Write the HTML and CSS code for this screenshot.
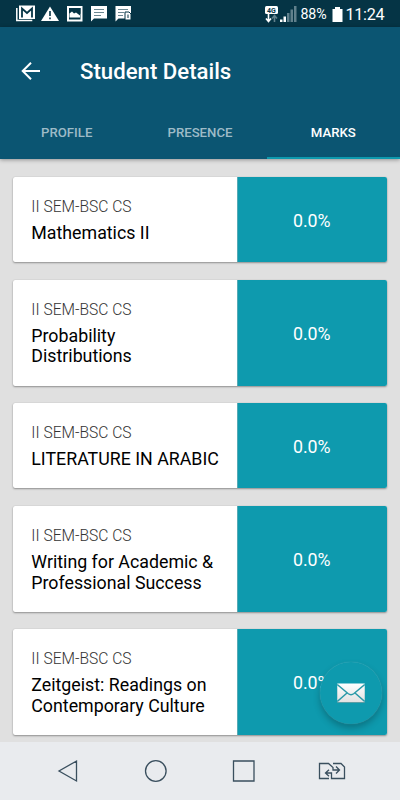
FILE: index.html
```html
<!DOCTYPE html>
<html lang="en">
<head>
<meta charset="utf-8">
<title>Student Details</title>
<link rel="stylesheet" href="styles.css">
</head>
<body>
<div class="screen">
  <header class="status">
    <svg class="notices" width="140" height="27" viewBox="0 0 140 27" fill="#fff">
      <path d="M16.800 8v12.500h15.500" fill="none" stroke="#fff" stroke-width="1.5"/>
      <path d="M19 5.500h16V19H19z"/>
      <path d="M22 17.500V8.500l5 4.500L32 8.500v9" fill="none" stroke="#053445" stroke-width="1.8"/>
      <path d="M50 6.500L59 21H41z"/>
      <path d="M50 11v5M50 17.500v1.700" stroke="#053445" stroke-width="1.6"/>
      <path fill-rule="evenodd" d="M67 6h15.500v15.500H67zM69 8v11.500h11.500V8z"/>
      <path d="M69 8h11.500v6l-2.500-2-2 2-2.500-1.500L69 17z" fill="#053445"/>
      <path d="M69.500 17.500v-4l2.500-2 2 2 2-1 4 3v2z"/>
      <path d="M91 6h16v12.500H94L91 21.500z"/>
      <path d="M94 9.500h10M94 12.500h10M94 15.500h7" stroke="#6b8791" stroke-width="1"/>
      <path d="M115.500 6h15.500v12.500h-12.500l-3 3z"/>
      <path d="M118 9.500h10M118 12.500h6M118 15.500h5" stroke="#6b8791" stroke-width="1"/>
      <path d="M125 12h4l2 2v6h-6z" stroke="#053445"/>
      <path d="M128 14.500v3.500" stroke="#053445"/>
    </svg>
    <div class="system">
      <svg width="34" height="22" viewBox="0 0 34 22">
        <rect x="1" y="3" width="13" height="8" rx="1.500" fill="#fff"/>
        <text class="network" x="7.500" y="9.600" text-anchor="middle">4G</text>
        <path d="M4.500 11v7M2 15.500l2.500 3 2.500-3" fill="none" stroke="#fff" stroke-width="1.6"/>
        <path d="M10.500 19v-6M8 15.500l2.500-3 2.500 3" fill="none" stroke="#60808c" stroke-width="1.6"/>
        <path d="M16 16.500h2.500V19H16zM19.500 13.500H22V19h-2.500z" fill="#fff"/>
        <path d="M23 10h2.500v9H23zM26.500 6.500H29V19h-2.500zM30 3h2.500v16H30z" fill="#60808c"/>
      </svg>
      <span class="charge">88%</span>
      <svg width="11" height="17" viewBox="0 0 11 17"><path d="M3 1h5v2h2.500v13H.5V3H3z" fill="#fff"/></svg>
      <span class="clock">11:24</span>
    </div>
  </header>
  <div class="appbar">
    <div class="toolbar">
      <svg class="back" width="20" height="20" viewBox="0 0 20 20"><path d="M19 10H2M10 1.700L1.700 10l8.300 8.300" fill="none" stroke="#fff" stroke-width="2"/></svg>
      <h1>Student Details</h1>
    </div>
    <nav class="tabs">
      <span class="tab">PROFILE</span>
      <span class="tab">PRESENCE</span>
      <span class="tab active">MARKS</span>
    </nav>
  </div>
  <main class="list">
    <article class="card"><div class="info"><p class="group">II SEM-BSC CS</p><h2>Mathematics II</h2></div><div class="mark">0.0%</div></article>
    <article class="card tall"><div class="info"><p class="group">II SEM-BSC CS</p><h2>Probability<br>Distributions</h2></div><div class="mark">0.0%</div></article>
    <article class="card"><div class="info"><p class="group">II SEM-BSC CS</p><h2>LITERATURE IN ARABIC</h2></div><div class="mark">0.0%</div></article>
    <article class="card tall"><div class="info"><p class="group">II SEM-BSC CS</p><h2>Writing for Academic &amp;<br>Professional Success</h2></div><div class="mark">0.0%</div></article>
    <article class="card tall"><div class="info"><p class="group">II SEM-BSC CS</p><h2>Zeitgeist: Readings on<br>Contemporary Culture</h2></div><div class="mark">0.0%</div></article>
    <div class="fab">
      <svg width="28" height="20" viewBox="0 0 28 20">
        <defs><linearGradient id="paper" x1="0" y1="0" x2="0" y2="1"><stop offset="0" stop-color="#fff"/><stop offset="1" stop-color="#e2e2e2"/></linearGradient></defs>
        <rect x=".3" y="1.500" width="27.400" height="18.500" fill="#5c9ea5"/>
        <rect x=".3" y=".5" width="27.400" height="18.500" fill="url(#paper)"/>
        <path d="M.3 1.500L11 10.500q3 2.300 6 0L27.700 1.500M.3 18.500l9.700-8.500M27.700 18.500L18 10" fill="none" stroke="#2a99a8" stroke-width="1.500"/>
      </svg>
    </div>
  </main>
  <footer class="navbar">
    <svg width="400" height="58" viewBox="0 0 400 58" fill="none" stroke="#3a4f5e" stroke-width="1.300">
      <path d="M76.500 19v20L59 29z"/>
      <circle cx="155.800" cy="29" r="10.300"/>
      <path d="M233.500 19h20.500v20h-20.500z"/>
      <path d="M329 36.500h-9.500v-15h9l4.500 4v2.500h6M336 24.500l3.500 3.500-3.500 3.500M333 21.500h8l3.500 3.500v11.500h-13V31H325.500M329 27.800L325.500 31l3.500 3.200"/>
    </svg>
  </footer>
</div>
</body>
</html>
```
FILE: styles.css
```css
* { box-sizing: border-box; }
body { margin: 0; font-family: Roboto, sans-serif; background: #e0e0e0; }
h1, h2, p { margin: 0; }
svg { display: block; flex: none; }

.screen { width: 400px; height: 800px; display: flex; flex-direction: column; overflow: hidden; }

.status { flex: none; height: 27px; background: #053445; display: flex; justify-content: space-between; color: #fff; }
.system { display: flex; align-items: center; padding: 1px 16.5px 0 0; }
.network { font-size: 7px; font-weight: 700; fill: #053445; }
.charge { width: 27px; margin: 0 4px 0 2.5px; font-size: 14.2px; letter-spacing: -.1px; }
.clock { width: 38px; margin-left: 3px; font-size: 16.2px; letter-spacing: -.3px; white-space: nowrap; }

.appbar { flex: none; height: 132px; background: #0b5572; position: relative; z-index: 1; box-shadow: 0 1px 4px rgba(0,0,0,.35); }
.toolbar { height: 88px; display: flex; align-items: center; padding-left: 21px; }
.toolbar h1 { margin-left: 39px; color: #fff; font-size: 22.2px; font-weight: 500; line-height: 26px; }
.tabs { display: flex; height: 44px; }
.tab { flex: 1; display: flex; align-items: center; justify-content: center; padding-bottom: 10px; font-size: 13.2px; font-weight: 500; color: #9dbbc7; }
.tab.active { color: #fff; border-bottom: 2px solid #0e9aae; padding-bottom: 8px; }

.list { flex: 1; min-height: 0; position: relative; padding: 18px 13.5px 0 13px; display: flex; flex-direction: column; gap: 17.6px; }
.card { flex: none; display: flex; height: 85.2px; background: #fff; border-radius: 2px; overflow: hidden; box-shadow: 0 1px 2px rgba(0,0,0,.35), 0 0 1px rgba(0,0,0,.2); }
.card.tall { height: 105.8px; }
.info { width: 224px; padding: 20.8px 0 0 18.3px; white-space: nowrap; }
.group { font-size: 15.6px; font-weight: 300; line-height: 18px; color: #333; }
.info h2 { margin-top: 7px; font-size: 17.8px; font-weight: 400; line-height: 20.8px; color: #000; }
.mark { flex: 1; background: #0e9aae; border-left: 1px solid #55aab5; color: #fff; font-size: 17.8px; display: flex; align-items: center; justify-content: center; padding: 1px 1px 0 0; }

.fab { position: absolute; left: 320px; top: 503px; width: 62px; height: 62px; border-radius: 50%; background: #0e9aae; display: flex; align-items: center; justify-content: center; box-shadow: 0 4px 7px rgba(0,0,0,.25), 0 0 1px rgba(255,255,255,.4); }

.navbar { flex: none; height: 58px; background: #e9ebee; position: relative; }
```
